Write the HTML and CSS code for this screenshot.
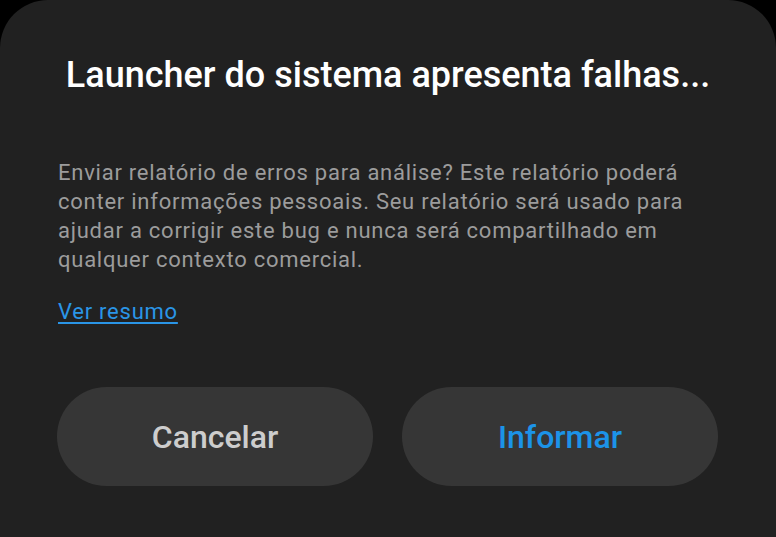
FILE: index.html
```html
<!DOCTYPE html>
<html lang="pt">
<head>
<meta charset="utf-8">
<title>Launcher do sistema apresenta falhas</title>
<link rel="stylesheet" href="styles.css">
</head>
<body>
<div class="dialog">
  <h1 class="title">Launcher do sistema apresenta falhas...</h1>
  <p class="message">Enviar relatório de erros para análise? Este relatório poderá<br>conter informações pessoais. Seu relatório será usado para<br>ajudar a corrigir este bug e nunca será compartilhado em<br>qualquer contexto comercial.</p>
  <a class="link" href="#">Ver resumo</a>
  <div class="actions">
    <button class="btn btn-cancel">Cancelar</button>
    <button class="btn btn-primary">Informar</button>
  </div>
</div>
</body>
</html>
```

FILE: styles.css
```css
html, body {
  margin: 0;
  padding: 0;
  background: #000;
}
body {
  width: 776px;
  height: 537px;
  overflow: hidden;
  font-family: Roboto, "Noto Sans", sans-serif;
}
.dialog {
  box-sizing: border-box;
  width: 776px;
  height: 537px;
  background: #212121;
  border-radius: 48px 48px 0 0;
  padding: 54px 0 0 0;
  display: flex;
  flex-direction: column;
}
.title {
  margin: 0;
  font-size: 36px;
  line-height: 42px;
  font-weight: 500;
  color: #fff;
  text-align: center;
}
.message {
  margin: 62px 0 0 58px;
  font-size: 22px;
  line-height: 29px;
  letter-spacing: 0.75px;
  color: #9c9c9c;
}
.link {
  margin: 23px 0 0 58px;
  align-self: flex-start;
  font-size: 22px;
  line-height: 29px;
  letter-spacing: 0.75px;
  color: #2a95e6;
  text-decoration: underline;
  text-underline-offset: 3px;
}
.actions {
  display: flex;
  gap: 29px;
  padding: 0 58px 0 57px;
  margin-top: 61px;
}
.btn {
  flex: 1;
  height: 99px;
  border: none;
  border-radius: 50px;
  background: #363636;
  font-family: Roboto, "Noto Sans", sans-serif;
  font-size: 32px;
  font-weight: 500;
  padding: 0;
}
.btn-cancel { color: #cdcdcd; }
.btn-primary { color: #1c93e8; }
```
